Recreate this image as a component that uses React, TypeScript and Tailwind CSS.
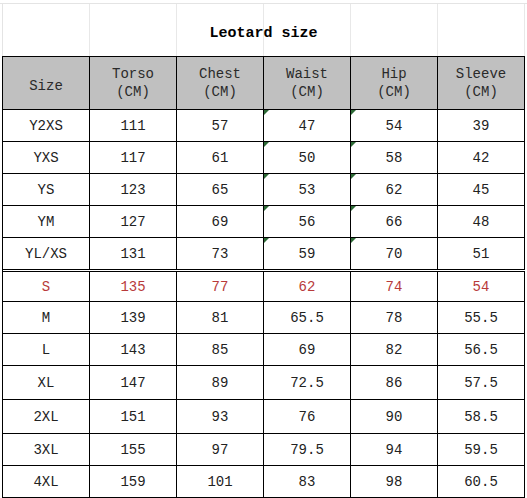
const cols = ['Size', 'Torso', 'Chest', 'Waist', 'Hip', 'Sleeve'];

type Row = { cells: string[]; h: string; red?: boolean; mark?: boolean; double?: boolean };

const rows: Row[] = [
  { cells: ['Y2XS', '111', '57', '47', '54', '39'], h: 'h-[32px]', mark: true },
  { cells: ['YXS', '117', '61', '50', '58', '42'], h: 'h-[32px]', mark: true },
  { cells: ['YS', '123', '65', '53', '62', '45'], h: 'h-[32px]', mark: true },
  { cells: ['YM', '127', '69', '56', '66', '48'], h: 'h-[32px]', mark: true },
  { cells: ['YL/XS', '131', '73', '59', '70', '51'], h: 'h-[34px]', mark: true, double: true },
  { cells: ['S', '135', '77', '62', '74', '54'], h: 'h-[30px]', red: true },
  { cells: ['M', '139', '81', '65.5', '78', '55.5'], h: 'h-[32px]' },
  { cells: ['L', '143', '85', '69', '82', '56.5'], h: 'h-[32px]' },
  { cells: ['XL', '147', '89', '72.5', '86', '57.5'], h: 'h-[34px]' },
  { cells: ['2XL', '151', '93', '76', '90', '58.5'], h: 'h-[34px]' },
  { cells: ['3XL', '155', '97', '79.5', '94', '59.5'], h: 'h-[32px]' },
  { cells: ['4XL', '159', '101', '83', '98', '60.5'], h: 'h-[32px]' },
];

export default function App() {
  return (
    <div
      className="w-[527px] h-[498px] bg-white overflow-hidden text-[14px] text-[#222]"
      style={{ fontFamily: '"Liberation Mono", "DejaVu Sans Mono", monospace' }}
    >
      {/* タイトル */}
      <div className="relative h-[56px]">
        <div className="absolute inset-0 border-t border-[#e4e4e4] mt-[3px] flex">
          <div className="w-[3px] border-r border-[#e4e4e4]" />
          {cols.map((c) => (
            <div key={c} className="w-[87px] border-r border-[#e8e8e8]" />
          ))}
        </div>
        <div className="relative h-full flex items-center justify-center pt-[12px]">
          <span className="text-[15px] font-bold text-black">Leotard size</span>
        </div>
      </div>

      {/* 表 */}
      <div className="ml-[2px] w-[523px] border-l border-t border-black">
        <div className="flex h-[53px] border-b border-black bg-[#c0c0c0] text-[#2a2a2a]">
          {cols.map((c) => (
            <div
              key={c}
              className={`w-[87px] border-r border-black flex flex-col items-center justify-center leading-[18px] ${
                c === 'Size' ? 'pt-[5px]' : 'pb-[1px]'
              }`}
            >
              <span>{c}</span>
              {c !== 'Size' && <span>(CM)</span>}
            </div>
          ))}
        </div>
        {rows.map((r) => (
          <div
            key={r.cells[0]}
            className={`flex ${r.h} ${
              r.double ? 'border-b-[3px] border-double' : 'border-b'
            } border-black ${r.red ? 'text-[#b83a3a]' : ''}`}
          >
            {r.cells.map((v, i) => (
              <div
                key={i}
                className="relative w-[87px] border-r border-black flex items-center justify-center pt-[1px]"
              >
                {r.mark && (i === 3 || i === 4) && (
                  <span className="absolute top-0 left-0 w-[5px] h-[5px] bg-[#2d6a36] [clip-path:polygon(0_0,100%_0,0_100%)]" />
                )}
                {v}
              </div>
            ))}
          </div>
        ))}
      </div>
    </div>
  );
}
